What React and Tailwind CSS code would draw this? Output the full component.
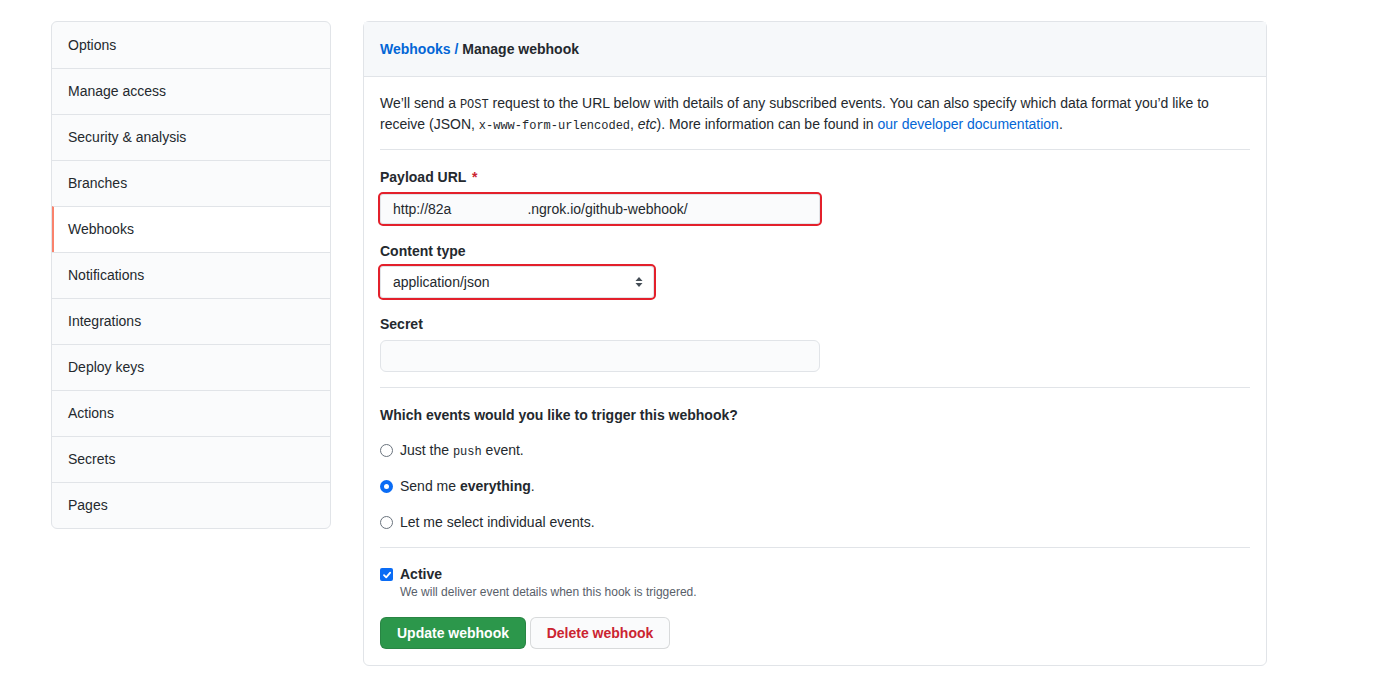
import React from 'react';

const navItems = [
  'Options',
  'Manage access',
  'Security & analysis',
  'Branches',
  'Webhooks',
  'Notifications',
  'Integrations',
  'Deploy keys',
  'Actions',
  'Secrets',
  'Pages',
];

const mono = "font-['Liberation_Mono',monospace] text-[12px] leading-none";

export default function App() {
  return (
    <div className="min-h-screen bg-white font-['Liberation_Sans',Arial,sans-serif] text-[14px] text-[#24292e]">
      <div className="flex items-start gap-[32px] pl-[51px] pt-[21px]">
        <Sidebar active="Webhooks" />
        <WebhookForm />
      </div>
    </div>
  );
}

function Sidebar({ active }) {
  return (
    <nav className="w-[280px] overflow-hidden rounded-md border border-[#e1e4e8] bg-[#fafbfc]">
      {navItems.map((item, i) => (
        <div
          key={item}
          className={`flex h-[46px] items-center px-4 ${i > 0 ? 'border-t border-[#e1e4e8]' : ''} ${
            item === active ? 'border-l-2 border-l-[#f9826c] bg-white pl-[14px]' : ''
          }`}
        >
          {item}
        </div>
      ))}
    </nav>
  );
}

function WebhookForm() {
  return (
    <div className="w-[904px] rounded-md border border-[#e1e4e8]">
      {/* Breadcrumb header */}
      <div className="flex h-[55px] items-center border-b border-[#e1e4e8] bg-[#f6f8fa] px-4 font-bold">
        <a className="text-[#0366d6]">Webhooks /</a>
        <span className="ml-1">Manage webhook</span>
      </div>

      <div className="px-4 pb-4 pt-[16px]">
        <p className="leading-[21px]">
          We’ll send a <code className={mono}>POST</code> request to the URL below with details of any subscribed events.
          You can also specify which data format you’d like to receive (JSON,{' '}
          <code className={mono}>x-www-form-urlencoded</code>, <em>etc</em>). More information can be found in{' '}
          <a className="text-[#0366d6]">our developer documentation</a>.
        </p>

        <hr className="mt-[14px] border-[#e1e4e8]" />

        <Label className="mt-[17px]">
          Payload URL <span className="ml-0.5 text-[#cb2431]">*</span>
        </Label>
        <div className="mt-[6px] flex h-[30px] w-[440px] items-center rounded-[3px] border border-[#e1e4e8] bg-[#fafbfc] px-3 outline-2 outline-[#e3202b]">
          <span>http://82a</span>
          <span className="ml-[76px]">.ngrok.io/github-webhook/</span>
        </div>

        <Label className="mt-[17px]">Content type</Label>
        <div className="mt-[4px] flex h-[32px] w-[274px] items-center justify-between rounded-[3px] border border-[#e1e4e8] bg-white pl-3 pr-[10px] outline-2 outline-[#e3202b]">
          <span>application/json</span>
          <svg width="8" height="12" viewBox="0 0 8 12" className="fill-[#444d56]">
            <path d="M4 1 L7.5 5 H0.5 Z" />
            <path d="M4 11 L7.5 7 H0.5 Z" />
          </svg>
        </div>

        <Label className="mt-[16px]">Secret</Label>
        <div className="mt-[5px] h-[32px] w-[440px] rounded-md border border-[#e1e4e8] bg-[#fafbfc]" />

        <hr className="mt-[15px] border-[#e1e4e8]" />

        <Label className="mt-[17px]">Which events would you like to trigger this webhook?</Label>

        <div className="mt-[6px] flex flex-col">
          <Radio>
            Just the <code className={mono}>push</code> event.
          </Radio>
          <Radio checked>
            Send me <b>everything</b>.
          </Radio>
          <Radio>Let me select individual events.</Radio>
        </div>

        <hr className="mt-[7px] border-[#e1e4e8]" />

        <div className="mt-[16px] flex gap-[7px]">
          <span className="mt-[4px] flex h-[13px] w-[13px] items-center justify-center rounded-[2px] bg-[#0a6cf5]">
            <svg width="10" height="10" viewBox="0 0 10 10" fill="none">
              <path d="M2 5.2 L4.2 7.4 L8.2 2.6" stroke="white" strokeWidth="1.8" strokeLinecap="round" strokeLinejoin="round" />
            </svg>
          </span>
          <div>
            <div className="font-bold leading-[21px]">Active</div>
            <div className="text-[12px] leading-[15px] text-[#586069]">
              We will deliver event details when this hook is triggered.
            </div>
          </div>
        </div>

        <div className="mt-[17px] flex gap-[4px]">
          <button className="h-[32px] w-[146px] rounded-md border border-[#1b1f2326] bg-[#2c974b] font-bold text-white">
            Update webhook
          </button>
          <button className="h-[32px] w-[140px] rounded-md border border-[#1b1f2326] bg-[#fafbfc] font-bold text-[#cb2431]">
            Delete webhook
          </button>
        </div>
      </div>
    </div>
  );
}

function Label({ children, className = '' }) {
  return <div className={`font-bold leading-[21px] ${className}`}>{children}</div>;
}

function Radio({ checked = false, children }) {
  return (
    <div className="flex h-[36px] items-center gap-[7px]">
      {checked ? (
        <span className="flex h-[13px] w-[13px] items-center justify-center rounded-full bg-[#0a6cf5]">
          <span className="h-[5px] w-[5px] rounded-full bg-white" />
        </span>
      ) : (
        <span className="h-[13px] w-[13px] rounded-full border border-[#6a737d] bg-white" />
      )}
      <span>{children}</span>
    </div>
  );
}
